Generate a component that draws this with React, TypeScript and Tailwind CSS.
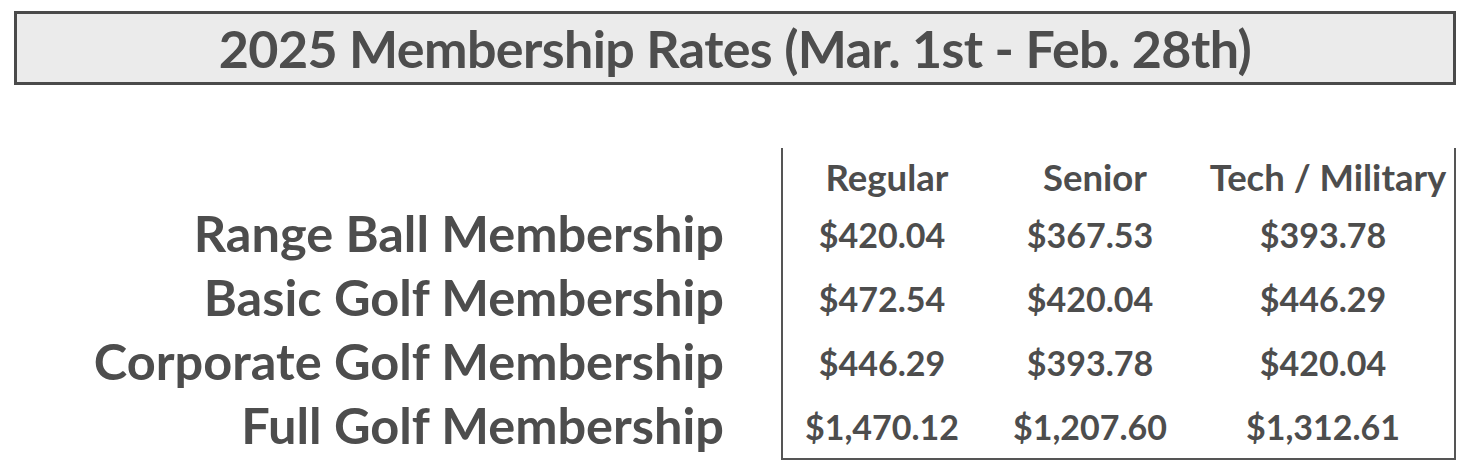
const rows = [
  { name: 'Range Ball Membership', regular: '$420.04', senior: '$367.53', tech: '$393.78' },
  { name: 'Basic Golf Membership', regular: '$472.54', senior: '$420.04', tech: '$446.29' },
  { name: 'Corporate Golf Membership', regular: '$446.29', senior: '$393.78', tech: '$420.04' },
  { name: 'Full Golf Membership', regular: '$1,470.12', senior: '$1,207.60', tech: '$1,312.61' },
]

export default function App() {
  return (
    <div className="w-[1472px] h-[469px] bg-white pt-[11px] pl-[14px] pr-[16px] font-['Lato',sans-serif] font-bold text-[#4d4d4d]">
      <div className="h-[74px] border-[3px] border-[#4a4a4a] bg-[#ebebeb] flex items-center justify-center">
        <h1 className="text-[52px] leading-none tracking-[-0.6px]">2025 Membership Rates (Mar. 1st - Feb. 28th)</h1>
      </div>

      <div className="flex mt-[63px]">
        <div className="w-[710px] pt-[53px]">
          {rows.map((r) => (
            <div key={r.name} className="h-[64px] flex items-center justify-end text-[50.5px] leading-none">
              {r.name}
            </div>
          ))}
        </div>

        <div className="ml-[57px] w-[675px] pb-[1px] border-l-2 border-r-2 border-b-2 border-[#555]">
          <div className="grid grid-cols-[198px_218px_248px] h-[53px] pt-[5px] pl-[5px] items-center text-center text-[36.5px] leading-none">
            <span>Regular</span>
            <span>Senior</span>
            <span>Tech / Military</span>
          </div>
          {rows.map((r) => (
            <div key={r.name} className="grid grid-cols-[198px_218px_248px] h-[64px] pt-[3px] items-center text-center text-[34px] leading-none">
              <span>{r.regular}</span>
              <span>{r.senior}</span>
              <span>{r.tech}</span>
            </div>
          ))}
        </div>
      </div>
    </div>
  )
}
